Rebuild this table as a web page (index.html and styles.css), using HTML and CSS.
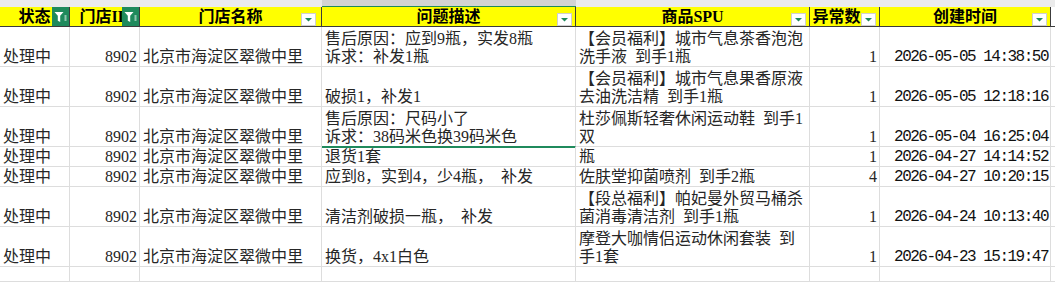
FILE: index.html
```html
<!DOCTYPE html>
<html lang="zh">
<head>
<meta charset="utf-8">
<title>Sheet</title>
<link rel="stylesheet" href="styles.css">
</head>
<body>
<div class="sheet">
  <div class="s"></div><div class="s"></div><div class="s"></div><div class="s sel"></div><div class="s"></div><div class="s"></div><div class="s"></div><div class="s"></div>

  <div class="h">状态<svg class="flt" viewBox="0 0 17 19"><rect width="17" height="19" fill="#1f8a5c"/><path d="M2.5 5h9l-3.3 3.7v6.3l-2.4-1.2v-5.1z" fill="#fff"/><rect x="12.5" y="8.5" width="2" height="1" fill="#fff"/><rect x="12.5" y="10.5" width="2" height="1" fill="#fff"/><rect x="12.5" y="12.5" width="2" height="1" fill="#fff"/></svg></div>
  <div class="h">门店ID<svg class="flt" viewBox="0 0 17 19"><rect width="17" height="19" fill="#1f8a5c"/><path d="M2.5 5h9l-3.3 3.7v6.3l-2.4-1.2v-5.1z" fill="#fff"/><rect x="12.5" y="8.5" width="2" height="1" fill="#fff"/><rect x="12.5" y="10.5" width="2" height="1" fill="#fff"/><rect x="12.5" y="12.5" width="2" height="1" fill="#fff"/></svg></div>
  <div class="h">门店名称<span class="dd dd3"><svg viewBox="0 0 13 11"><polygon points="3,4 10,4 6.5,7.5" fill="#1f8a5c"/></svg></span></div>
  <div class="h">问题描述<span class="dd"><svg viewBox="0 0 13 11"><polygon points="3,4 10,4 6.5,7.5" fill="#1f8a5c"/></svg></span></div>
  <div class="h">商品SPU<span class="dd"><svg viewBox="0 0 13 11"><polygon points="3,4 10,4 6.5,7.5" fill="#1f8a5c"/></svg></span></div>
  <div class="h h6">异常数<span class="dd"><svg viewBox="0 0 13 11"><polygon points="3,4 10,4 6.5,7.5" fill="#1f8a5c"/></svg></span></div>
  <div class="h">创建时间<span class="dd"><svg viewBox="0 0 13 11"><polygon points="3,4 10,4 6.5,7.5" fill="#1f8a5c"/></svg></span></div>
  <div class="h end"></div>

  <div class="c"><span>处理中</span></div>
  <div class="c r"><span>8902</span></div>
  <div class="c"><span>北京市海淀区翠微中里</span></div>
  <div class="c"><span>售后原因：应到9瓶，实发8瓶<br>诉求：补发1瓶</span></div>
  <div class="c"><span>【会员福利】城市气息茶香泡泡<br>洗手液&ensp;到手1瓶</span></div>
  <div class="c r"><span>1</span></div>
  <div class="c r"><span class="dt">2026-05-05 14:38:50</span></div>
  <div class="c"></div>

  <div class="c"><span>处理中</span></div>
  <div class="c r"><span>8902</span></div>
  <div class="c"><span>北京市海淀区翠微中里</span></div>
  <div class="c"><span>破损1，补发1</span></div>
  <div class="c"><span>【会员福利】城市气息果香原液<br>去油洗洁精&ensp;到手1瓶</span></div>
  <div class="c r"><span>1</span></div>
  <div class="c r"><span class="dt">2026-05-05 12:18:16</span></div>
  <div class="c"></div>

  <div class="c"><span>处理中</span></div>
  <div class="c r"><span>8902</span></div>
  <div class="c"><span>北京市海淀区翠微中里</span></div>
  <div class="c act"><span>售后原因：尺码小了<br>诉求：38码米色换39码米色</span></div>
  <div class="c"><span>杜莎佩斯轻奢休闲运动鞋&ensp;到手1<br>双</span></div>
  <div class="c r"><span>1</span></div>
  <div class="c r"><span class="dt">2026-05-04 16:25:04</span></div>
  <div class="c"></div>

  <div class="c"><span>处理中</span></div>
  <div class="c r"><span>8902</span></div>
  <div class="c"><span>北京市海淀区翠微中里</span></div>
  <div class="c"><span>退货1套</span></div>
  <div class="c"><span>瓶</span></div>
  <div class="c r"><span>1</span></div>
  <div class="c r"><span class="dt">2026-04-27 14:14:52</span></div>
  <div class="c"></div>

  <div class="c"><span>处理中</span></div>
  <div class="c r"><span>8902</span></div>
  <div class="c"><span>北京市海淀区翠微中里</span></div>
  <div class="c"><span>应到8，实到4，少4瓶，&ensp;补发</span></div>
  <div class="c"><span>佐肤堂抑菌喷剂&ensp;到手2瓶</span></div>
  <div class="c r"><span>4</span></div>
  <div class="c r"><span class="dt">2026-04-27 10:20:15</span></div>
  <div class="c"></div>

  <div class="c"><span>处理中</span></div>
  <div class="c r"><span>8902</span></div>
  <div class="c"><span>北京市海淀区翠微中里</span></div>
  <div class="c"><span>清洁剂破损一瓶，&ensp;补发</span></div>
  <div class="c"><span>【段总福利】帕妃曼外贸马桶杀<br>菌消毒清洁剂&ensp;到手1瓶</span></div>
  <div class="c r"><span>1</span></div>
  <div class="c r"><span class="dt">2026-04-24 10:13:40</span></div>
  <div class="c"></div>

  <div class="c"><span>处理中</span></div>
  <div class="c r"><span>8902</span></div>
  <div class="c"><span>北京市海淀区翠微中里</span></div>
  <div class="c"><span>换货，4x1白色</span></div>
  <div class="c"><span>摩登大咖情侣运动休闲套装&ensp;到<br>手1套</span></div>
  <div class="c r"><span>1</span></div>
  <div class="c r"><span class="dt">2026-04-23 15:19:47</span></div>
  <div class="c"></div>

  <div class="c"></div><div class="c"></div><div class="c"></div><div class="c"></div><div class="c"></div><div class="c"></div><div class="c"></div><div class="c"></div>
</div>
</body>
</html>
```
FILE: styles.css
```css
html, body {
  margin: 0;
  padding: 0;
  background: #fff;
  overflow: hidden;
}
body {
  font-family: "Liberation Serif", "Noto Sans CJK SC", serif;
  font-size: 16px;
  color: #262626;
}
.sheet {
  display: grid;
  grid-template-columns: 70px 70px 182px 254px 234px 70px 171px 1fr;
  grid-template-rows: 7px 20px 40px 40px 40px 20px 20px 40px 40px 1fr;
  height: 282px;
}
.s {
  background: #ebebeb;
}
.s.sel {
  background: #d3d3d3;
  box-shadow: inset 0 -1px 0 #1f8a5c;
}
.h {
  position: relative;
  display: flex;
  align-items: center;
  justify-content: center;
  background: #ffff00;
  border-right: 1px solid #3c3c3c;
  border-bottom: 1px solid #3c3c3c;
  font-weight: 700;
  color: #000;
  line-height: 19px;
  white-space: nowrap;
  overflow: hidden;
}
.h6 {
  padding-right: 16px;
}
.h.end {
  background: #fff;
  border-right: none;
}
.flt {
  position: absolute;
  top: 0;
  right: 0;
  width: 17px;
  height: 19px;
}
.dd {
  position: absolute;
  top: 6px;
  right: 3px;
  width: 15px;
  height: 13px;
  box-sizing: border-box;
  background: #fff;
  border: 1px solid #cfcfcf;
  display: flex;
}
.dd3 {
  right: 5px;
}
.dd svg {
  width: 13px;
  height: 11px;
}
.c {
  display: flex;
  align-items: flex-end;
  box-sizing: border-box;
  padding: 0 3px;
  border-right: 1px solid #dddddd;
  border-bottom: 1px solid #dddddd;
  line-height: 18px;
  white-space: nowrap;
  overflow: hidden;
}
.r {
  justify-content: flex-end;
  padding-right: 2px;
}
.dt {
  font-family: "Liberation Mono", monospace;
  font-size: 16px;
  letter-spacing: -1.5px;
  color: #111;
}
.act {
  border-bottom: 1px solid #1f8a5c;
  box-shadow: 0 1px 0 #1f8a5c;
  overflow: visible;
}
```
